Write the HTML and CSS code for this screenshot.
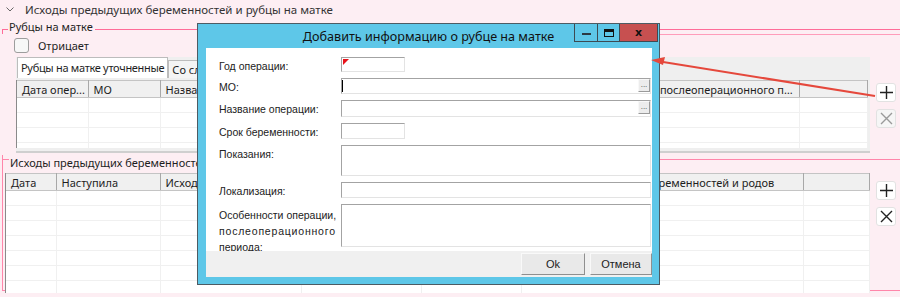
FILE: index.html
```html
<!DOCTYPE html>
<html lang="ru">
<head>
    <meta charset="UTF-8">
    <meta name="viewport" content="width=device-width, initial-scale=1.0">
    <title>Исходы предыдущих беременностей и рубцы на матке</title>
    <link rel="stylesheet" href="styles.css">
</head>
<body>
    <div class="page">
        <div class="section-head">
            <svg class="chevron" width="8" height="5" viewBox="0 0 8 5"><path d="M0.5 0.5 L4 4 L7.5 0.5" fill="none" stroke="#666" stroke-width="1"/></svg>
            <span>Исходы предыдущих беременностей и рубцы на матке</span>
        </div>

        <div class="group-scars">
            <div class="group-title">
                <span class="tick"></span>
                <span class="group-label">Рубцы на матке</span>
                <span class="rule"></span>
            </div>
            <div class="subrule"></div>
            <label class="check-row"><span class="checkbox"></span>Отрицает</label>

            <div class="grid-row scars-row">
                <div class="tabs">
                    <div class="tab-strip">
                        <span class="tab active">Рубцы на матке уточненные</span>
                        <span class="tab">Со слов пациентки</span>
                    </div>
                    <div class="tab-page">
                        <div class="grid-wrap scars-wrap">
                            <table class="grid">
                                <colgroup>
                                    <col style="width:71px"><col style="width:72px"><col style="width:170px">
                                    <col style="width:110px"><col style="width:83px"><col style="width:276px"><col>
                                </colgroup>
                                <thead>
                                    <tr><th>Дата опер...</th><th>МО</th><th>Название операции</th><th>Срок беременности</th><th>Показания</th><th>Особенности операции, послеоперационного периода</th><th></th></tr>
                                </thead>
                                <tbody>
                                    <tr><td></td><td></td><td></td><td></td><td></td><td></td><td></td></tr>
                                    <tr><td></td><td></td><td></td><td></td><td></td><td></td><td></td></tr>
                                    <tr><td></td><td></td><td></td><td></td><td></td><td></td><td></td></tr>
                                    <tr><td></td><td></td><td></td><td></td><td></td><td></td><td></td></tr>
                                </tbody>
                            </table>
                        </div>
                    </div>
                </div>
                <div class="side-buttons scars-buttons">
                    <button class="tool"><svg width="13" height="13" viewBox="0 0 13 13"><path d="M6.5 0 V13 M0 6.5 H13" stroke="#222" stroke-width="1.4"/></svg></button>
                    <button class="tool disabled"><svg width="13" height="13" viewBox="0 0 13 13"><path d="M1 1 L12 12 M12 1 L1 12" stroke="#9a9a9a" stroke-width="1.4"/></svg></button>
                </div>
            </div>
        </div>

        <div class="group-outcomes">
            <div class="group-title outcomes-title">
                <span class="pre"></span>
                <span class="group-label">Исходы предыдущих беременностей</span>
                <span class="rule"></span>
            </div>
            <div class="grid-row outcomes-row">
                <div class="grid-wrap outcomes-wrap">
                    <table class="grid">
                        <colgroup>
                            <col style="width:50px"><col style="width:104px"><col style="width:141px">
                            <col style="width:120px"><col style="width:100px"><col style="width:282px"><col>
                        </colgroup>
                        <thead>
                            <tr><th>Дата</th><th>Наступила</th><th>Исход</th><th>Срок</th><th>Способ</th><th>Особенности течения беременностей и родов</th><th></th></tr>
                        </thead>
                        <tbody>
                            <tr><td></td><td></td><td></td><td></td><td></td><td></td><td></td></tr>
                            <tr><td></td><td></td><td></td><td></td><td></td><td></td><td></td></tr>
                            <tr><td></td><td></td><td></td><td></td><td></td><td></td><td></td></tr>
                            <tr><td></td><td></td><td></td><td></td><td></td><td></td><td></td></tr>
                            <tr><td></td><td></td><td></td><td></td><td></td><td></td><td></td></tr>
                            <tr><td></td><td></td><td></td><td></td><td></td><td></td><td></td></tr>
                            <tr><td></td><td></td><td></td><td></td><td></td><td></td><td></td></tr>
                        </tbody>
                    </table>
                </div>
                <div class="side-buttons outcomes-buttons">
                    <button class="tool"><svg width="13" height="13" viewBox="0 0 13 13"><path d="M6.5 0 V13 M0 6.5 H13" stroke="#222" stroke-width="1.4"/></svg></button>
                    <button class="tool"><svg width="13" height="13" viewBox="0 0 13 13"><path d="M1 1 L12 12 M12 1 L1 12" stroke="#222" stroke-width="1.4"/></svg></button>
                </div>
            </div>
        </div>

        <!-- modal window over the form -->
        <div class="dialog">
            <div class="title-bar">Добавить информацию о рубце на матке</div>
            <div class="win-buttons">
                <span class="win-btn min"><i></i></span>
                <span class="win-btn max"><i></i></span>
                <span class="win-btn close">x</span>
            </div>
            <div class="client">
                <div class="form">
                    <span class="lbl">Год операции:</span>
                    <span class="field short required"></span>

                    <span class="lbl">МО:</span>
                    <span class="field lookup caret"><span class="dots">...</span></span>

                    <span class="lbl">Название операции:</span>
                    <span class="field lookup"><span class="dots">...</span></span>

                    <span class="lbl">Срок беременности:</span>
                    <span class="field short"></span>

                    <span class="lbl">Показания:</span>
                    <span class="field"></span>

                    <span class="lbl">Локализация:</span>
                    <span class="field"></span>

                    <span class="lbl lbl-multi">
                        <span class="line-justify">Особенности операции,</span>
                        <span class="line-spaced">послеоперационного</span>
                        <span>периода:</span>
                    </span>
                    <span class="field"></span>
                </div>
                <div class="footer">
                    <button class="btn">Ok</button>
                    <button class="btn">Отмена</button>
                </div>
            </div>
        </div>

        <svg class="arrow" width="900" height="297" viewBox="0 0 900 297">
            <line x1="875" y1="96" x2="660" y2="61.5" stroke="#e5483c" stroke-width="2"/>
            <polygon points="651,60 665,57 663,65" fill="#e5483c"/>
        </svg>
    </div>
</body>
</html>
```

FILE: styles.css
```css
* {
    box-sizing: border-box;
}
body {
    margin: 0;
    background-color: #fdeef3;
    font-family: "Noto Sans", sans-serif;
    font-size: 11px;
    color: #1e1e1e;
}
.page {
    position: relative;
    width: 900px;
    height: 297px;
    overflow: hidden;
}
.section-head {
    height: 18px;
    display: flex;
    align-items: center;
    gap: 11px;
    padding-left: 6px;
    font-size: 11.5px;
    color: #333;
}

/* group boxes */
.group-title {
    display: flex;
    height: 16px;
}
.group-label {
    line-height: 16px;
    white-space: nowrap;
    padding: 0 2px 0 1px;
}
.group-scars .group-label {
    line-height: 18px;
}
.group-scars .tick {
    width: 6px;
    margin-left: 2px;
    margin-top: 11px;
    border-top: 1px solid #ff6c98;
    border-left: 1px solid #ff6c98;
}
.group-scars .rule {
    flex: 1;
    margin-top: 11px;
    border-top: 1px solid #ff6c98;
}
.subrule {
    margin-left: 200px;
    border-top: 1px solid #ff9cba;
}
.check-row {
    display: flex;
    align-items: center;
    gap: 9px;
    height: 15px;
    margin-top: 3px;
    padding-left: 14px;
}
.checkbox {
    width: 15px;
    height: 15px;
    border: 1px solid #9d9d9d;
    border-radius: 3px;
    background-color: #f7f7f7;
}

.grid-row {
    display: flex;
    gap: 6px;
}
.scars-row {
    margin-top: 4px;
    padding-left: 16px;
}
.tabs {
    width: 854px;
    background-color: #efefef;
}
.tab-strip {
    display: flex;
    align-items: flex-end;
    height: 21px;
    padding-left: 1px;
}
.tab {
    height: 18px;
    line-height: 17px;
    padding: 0 3px;
    border: 1px solid #bcbcbc;
    border-bottom: none;
    background-color: #f4f4f4;
    white-space: nowrap;
    overflow: hidden;
}
.tab.active {
    height: 21px;
    line-height: 20px;
    letter-spacing: -0.3px;
    background-color: #ffffff;
}
.tab-page {
    padding: 2px 2px 3px 0;
    border-bottom: 2px solid #cfcfcf;
}
.grid-wrap {
    background-color: #ffffff;
    border-left: 1px solid #8a8a8a;
    overflow: hidden;
}
.scars-wrap {
    height: 68px;
}
.grid {
    width: 100%;
    border-collapse: collapse;
    table-layout: fixed;
}
.grid th {
    height: 17px;
    padding: 0 0 0 5px;
    font-weight: normal;
    text-align: left;
    white-space: nowrap;
    overflow: hidden;
    text-overflow: ellipsis;
    background-color: #f0f0f0;
    border-top: 1px solid #c4c4c4;
    border-bottom: 1px solid #c4c4c4;
    border-right: 1px solid #a8a8a8;
}
.grid td {
    height: 15px;
    padding: 0;
    border-bottom: 1px solid #f0f0f0;
    border-right: 1px solid #f0f0f0;
}

.side-buttons {
    display: flex;
    flex-direction: column;
    gap: 7px;
}
.scars-buttons {
    margin-top: 26px;
}
.tool {
    width: 20px;
    height: 19px;
    padding: 0;
    display: flex;
    align-items: center;
    justify-content: center;
    background-color: #ffffff;
    border: 1px solid #e2e2e2;
    border-radius: 3px;
}
.tool.disabled {
    background-color: #f6f6f6;
}

.group-outcomes {
    margin: 6px 0 0 2px;
    height: 136px;
    border-left: 1px solid #ff86aa;
    border-bottom: 1px solid #ff86aa;
}
.outcomes-title {
    margin-top: -4px;
}
.outcomes-title .pre {
    width: 6px;
    margin-top: 4px;
    border-top: 1px solid #ff86aa;
}
.outcomes-title .rule {
    flex: 1;
    margin-top: 4px;
    border-top: 1px solid #ff86aa;
}
.outcomes-row {
    margin-top: 2px;
    padding-left: 2px;
}
.outcomes-wrap {
    width: 865px;
    height: 120px;
}
.outcomes-buttons {
    margin-top: 8px;
}

/* dialog */
.dialog {
    position: absolute;
    left: 197px;
    top: 23px;
    width: 463px;
    height: 262px;
    background-color: #5ec7e8;
    border: 1px solid #4d5b63;
    font-family: "Liberation Sans", sans-serif;
}
.title-bar {
    height: 24px;
    line-height: 25px;
    text-align: center;
    font-family: "Noto Sans", sans-serif;
    font-size: 12.6px;
    color: #111;
}
.win-buttons {
    position: absolute;
    top: 0;
    right: 1px;
    display: flex;
    height: 18px;
    border: 1px solid #3d4a52;
    border-top: none;
}
.win-btn {
    display: flex;
    align-items: center;
    justify-content: center;
    height: 100%;
    border-left: 1px solid #3d4a52;
}
.win-btn:first-child {
    border-left: none;
}
.win-btn.min {
    width: 22px;
}
.win-btn.min i {
    width: 9px;
    height: 2px;
    margin-top: 2px;
    background-color: #2b3a44;
}
.win-btn.max {
    width: 22px;
}
.win-btn.max i {
    width: 10px;
    height: 8px;
    border: 1px solid #111;
    border-top-width: 3px;
}
.win-btn.close {
    width: 38px;
    background-color: #c75050;
    color: #111;
    font-family: "DejaVu Sans", sans-serif;
    font-size: 11px;
    font-weight: bold;
    line-height: 1;
}
.client {
    height: 229px;
    margin: 0 7px 0 8px;
    background-color: #ffffff;
    display: flex;
    flex-direction: column;
}
.form {
    flex: 1;
    display: grid;
    grid-template-columns: 122px 1fr;
    grid-template-rows: 15px 16px 17px 16px 31px 16px 43px;
    row-gap: 6px;
    padding: 9px 1px 0 13px;
}
.lbl {
    padding-top: 2px;
    line-height: 14px;
    font-size: 10.5px;
    color: #222;
    white-space: nowrap;
}
.lbl-multi {
    display: flex;
    flex-direction: column;
    width: 114px;
    padding-top: 3px;
    line-height: 16px;
}
.line-justify {
    text-align: justify;
    text-align-last: justify;
}
.line-spaced {
    letter-spacing: 0.8px;
}
.field {
    position: relative;
    background-color: #ffffff;
    border: 1px solid;
    border-color: #a3a3a3 #e3e3e3 #e3e3e3 #a3a3a3;
}
.field.short {
    width: 64px;
}
.field.required::before {
    content: "";
    position: absolute;
    left: 1px;
    top: 1px;
    border-top: 6px solid #e8121a;
    border-right: 6px solid transparent;
}
.field.caret::after {
    content: "";
    position: absolute;
    left: 0;
    top: 1px;
    width: 1px;
    height: 12px;
    background-color: #000;
}
.dots {
    position: absolute;
    right: 0;
    top: 0;
    width: 12px;
    height: 13px;
    line-height: 9px;
    text-align: center;
    font-size: 8px;
    color: #444;
    background-color: #ececec;
    border: 1px solid;
    border-color: #f8f8f8 #9a9a9a #9a9a9a #f8f8f8;
}
.footer {
    height: 26px;
    display: flex;
    justify-content: flex-end;
    gap: 5px;
    padding-top: 2px;
    background-color: #f0f0f0;
}
.btn {
    height: 22px;
    padding: 0;
    font-family: "Liberation Sans", sans-serif;
    font-size: 11px;
    color: #222;
    background-color: #e9e9e9;
    border: 1px solid;
    border-color: #f9f9f9 #8f8f8f #8f8f8f #f9f9f9;
}
.btn:first-child {
    width: 64px;
}
.btn:last-child {
    width: 62px;
}

.arrow {
    position: absolute;
    left: 0;
    top: 0;
    pointer-events: none;
}
```
